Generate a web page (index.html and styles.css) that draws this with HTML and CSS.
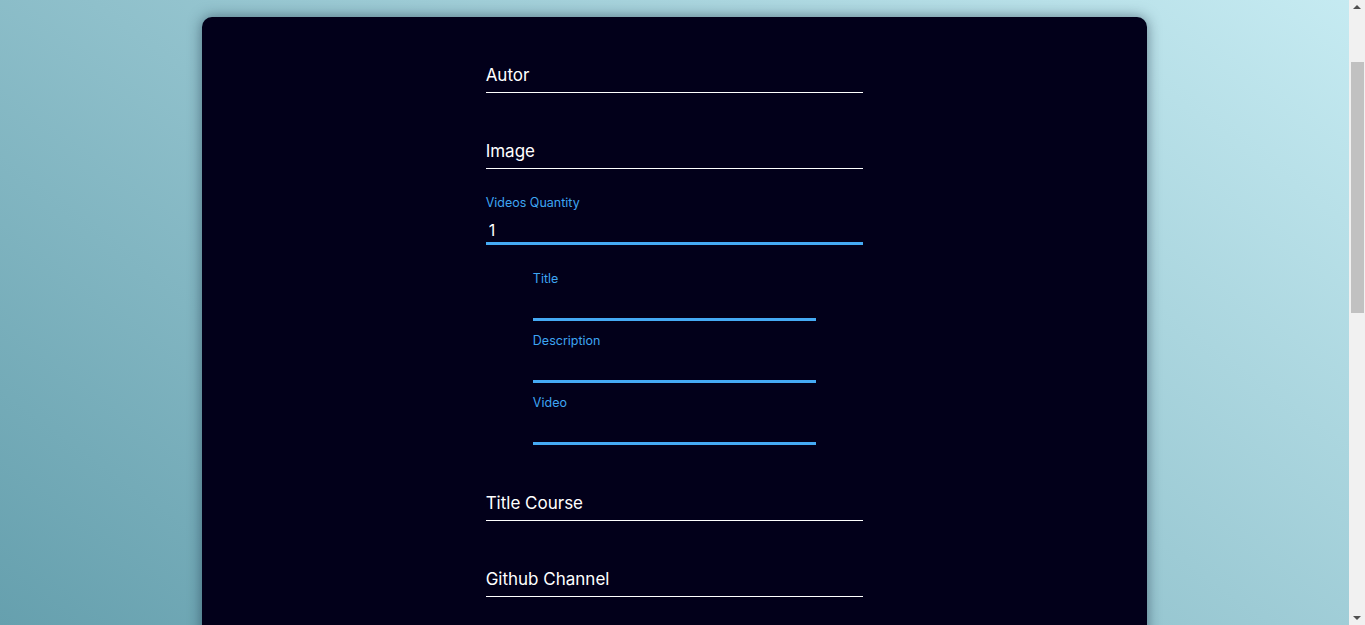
FILE: index.html
```html
<!DOCTYPE html>
<html lang="en">
<head>
<meta charset="utf-8">
<title>Create Course</title>
<link rel="stylesheet" href="styles.css">
</head>
<body>
<main class="card">
  <form class="form">
    <div class="field">
      <input id="autor" type="text" required>
      <label for="autor">Autor</label>
    </div>
    <div class="field">
      <input id="image" type="text" required>
      <label for="image">Image</label>
    </div>
    <div class="field is-filled">
      <input id="qty" type="text" value="1">
      <label for="qty">Videos Quantity</label>
    </div>
    <div class="videos">
      <div class="field is-filled">
        <input id="v-title" type="text">
        <label for="v-title">Title</label>
      </div>
      <div class="field is-filled">
        <input id="v-desc" type="text">
        <label for="v-desc">Description</label>
      </div>
      <div class="field is-filled">
        <input id="v-video" type="text">
        <label for="v-video">Video</label>
      </div>
    </div>
    <div class="field">
      <input id="course" type="text" required>
      <label for="course">Title Course</label>
    </div>
    <div class="field">
      <input id="github" type="text" required>
      <label for="github">Github Channel</label>
    </div>
  </form>
</main>
<div class="scrollbar" aria-hidden="true">
  <span class="scrollbar-arrow scrollbar-arrow--up"></span>
  <span class="scrollbar-thumb"></span>
  <span class="scrollbar-arrow scrollbar-arrow--down"></span>
</div>
</body>
</html>
```
FILE: styles.css
```css
html {
  min-height: 100%;
  background: linear-gradient(36deg, #66a0ae 0%, #c6ebf2 100%) fixed;
}

body {
  margin: 0;
  padding: 17px 16px 0 0;
  font-family: Inter, "Noto Sans", sans-serif;
}

.card {
  box-sizing: border-box;
  width: 70%;
  min-height: 1440px;
  margin: 0 auto;
  padding: 20px 0 40px;
  background: #02001a;
  border-radius: 10px;
  box-shadow: 0 0 14px rgba(20, 40, 60, 0.55);
}

.form {
  width: 40%;
  margin: 0 auto;
  display: flex;
  flex-direction: column;
  gap: 20px;
}

.videos {
  width: 75%;
  margin: 0 auto;
  display: flex;
  flex-direction: column;
  gap: 6px;
}

.field {
  position: relative;
  padding-top: 20px;
}

.field input {
  display: block;
  box-sizing: border-box;
  width: 100%;
  height: 36px;
  margin: 0;
  padding: 9px 0 0 3px;
  border: 0;
  border-bottom: 1px solid #ffffff;
  background: transparent;
  color: #ffffff;
  font: 16px Inter, "Noto Sans", sans-serif;
  outline: none;
}

.field label {
  position: absolute;
  left: 0;
  top: 28px;
  font-size: 17px;
  line-height: 20px;
  color: #ffffff;
  pointer-events: none;
}

.field.is-filled input {
  border-bottom: 3px solid #45aaf4;
}

.field.is-filled label {
  top: 6px;
  font-size: 12.5px;
  line-height: 16px;
  color: #3ea5f2;
}

/* classic browser scrollbar as it appears in the screenshot */
.scrollbar {
  position: fixed;
  top: 0;
  right: 0;
  bottom: 0;
  width: 16px;
  background: #f1f1f1;
}

.scrollbar-thumb {
  position: absolute;
  left: 2px;
  right: 1px;
  top: 62px;
  height: 251px;
  background: #c1c1c1;
}

.scrollbar-arrow {
  position: absolute;
  left: 4px;
  width: 0;
  height: 0;
  border-left: 4px solid transparent;
  border-right: 4px solid transparent;
}

.scrollbar-arrow--up {
  top: 5px;
  border-bottom: 4px solid #505050;
}

.scrollbar-arrow--down {
  bottom: 5px;
  border-top: 4px solid #505050;
}
```
